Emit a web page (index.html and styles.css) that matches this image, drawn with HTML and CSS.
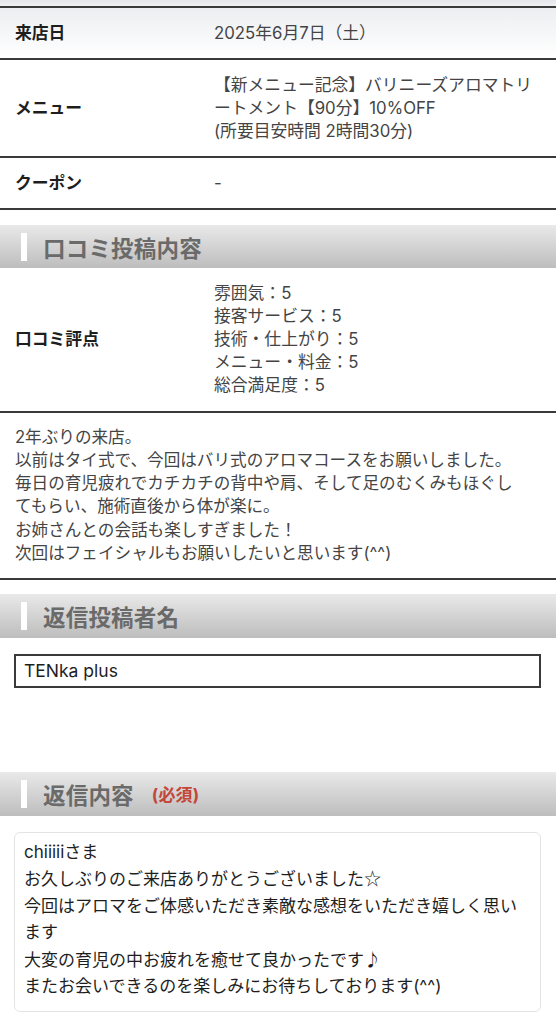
FILE: index.html
```html
<!DOCTYPE html>
<html lang="ja">
<head>
<meta charset="utf-8">
<link rel="stylesheet" href="styles.css">
</head>
<body>
<div class="topband"></div>
<div class="info">
  <div class="row row-first">
    <div class="label">来店日</div>
    <div class="value">2025年6月7日（土）</div>
  </div>
  <div class="row">
    <div class="label">メニュー</div>
    <div class="value">【新メニュー記念】バリニーズアロマトリートメント【90分】10%OFF<br>(所要目安時間 2時間30分)</div>
  </div>
  <div class="row">
    <div class="label">クーポン</div>
    <div class="value">-</div>
  </div>
</div>

<h2 class="section-head first-head"><span class="bar"></span>口コミ投稿内容</h2>
<div class="row rating">
  <div class="label">口コミ評点</div>
  <div class="value">雰囲気：5<br>接客サービス：5<br>技術・仕上がり：5<br>メニュー・料金：5<br>総合満足度：5</div>
</div>
<div class="comment">2年ぶりの来店。<br>以前はタイ式で、今回はバリ式のアロマコースをお願いしました。<br>毎日の育児疲れでカチカチの背中や肩、そして足のむくみもほぐしてもらい、施術直後から体が楽に。<br>お姉さんとの会話も楽しすぎました！<br>次回はフェイシャルもお願いしたいと思います(^^)</div>

<h2 class="section-head"><span class="bar"></span>返信投稿者名</h2>
<div class="field">
  <div class="input">TENka plus</div>
</div>

<h2 class="section-head reply-head"><span class="bar"></span>返信内容<span class="req">(必須)</span></h2>
<div class="field">
  <div class="textarea">chiiiiiさま<br>お久しぶりのご来店ありがとうございました<span class="sym">☆</span><br>今回はアロマをご体感いただき素敵な感想をいただき嬉しく思います<br>大変の育児の中お疲れを癒せて良かったです<span class="sym">♪</span><br>またお会いできるのを楽しみにお待ちしております(^^)</div>
</div>
</body>
</html>
```

FILE: styles.css
```css
html, body {
  margin: 0;
  padding: 0;
  background: #ffffff;
}
body {
  width: 556px;
  font-family: Inter, "Noto Sans CJK JP", sans-serif;
  color: #3a3a3a;
  font-size: 16.8px;
}
.topband {
  height: 6px;
  background: linear-gradient(#e4e6ea, #eef0f3);
}
.info {
  border-bottom: 2px solid #3a3a3a;
}
.row {
  display: flex;
  border-top: 2px solid #3a3a3a;
  line-height: 23px;
}
.row-first {
  background: linear-gradient(#eceef1, #ffffff);
}
.label {
  width: 214px;
  flex: none;
  padding-left: 15px;
  box-sizing: border-box;
  font-weight: bold;
  color: #1e1e1e;
  display: flex;
  align-items: center;
}
.value {
  flex: 1;
  padding: 13.5px 15px 13.5px 0;
  color: #444;
  font-size: 16.8px;
}
.section-head {
  margin: 14px 0 0;
  height: 44px;
  display: flex;
  align-items: center;
  background: linear-gradient(#e9e9e9, #bdbdbd);
  color: #6a6a6a;
  font-size: 22.5px;
  font-weight: bold;
  letter-spacing: 0.2px;
}
.first-head {
  margin-top: 15px;
  height: 43px;
}
.bar {
  width: 6px;
  height: 28px;
  background: #ffffff;
  margin: 0 16px 0 21px;
}
.req {
  color: #c4463a;
  font-size: 17px;
  font-weight: bold;
  margin-left: 18px;
}
.rating {
  border-top: none;
  border-bottom: 2px solid #3a3a3a;
}
.rating .value {
  padding: 14px 15px 14px 0;
}
.comment {
  padding: 12.5px 30px 12.5px 15px;
  line-height: 23.3px;
  border-bottom: 2px solid #3a3a3a;
  color: #444;
  font-size: 16.6px;
}
.field {
  padding: 16px 15px 0 14px;
}
.input {
  height: 34px;
  box-sizing: border-box;
  border: 2px solid #3a3a3a;
  padding: 0 8px;
  line-height: 30px;
  color: #1e1e1e;
  font-size: 17.5px;
}
.reply-head {
  margin-top: 84px;
}
.textarea {
  height: 180px;
  box-sizing: border-box;
  border: 1px solid #e3e3e3;
  border-radius: 6px;
  padding: 6px 9px 12px 9px;
  line-height: 26.5px;
  font-size: 17px;
  color: #1e1e1e;
}
.sym {
  font-family: "Noto Sans CJK JP", sans-serif;
}
```
